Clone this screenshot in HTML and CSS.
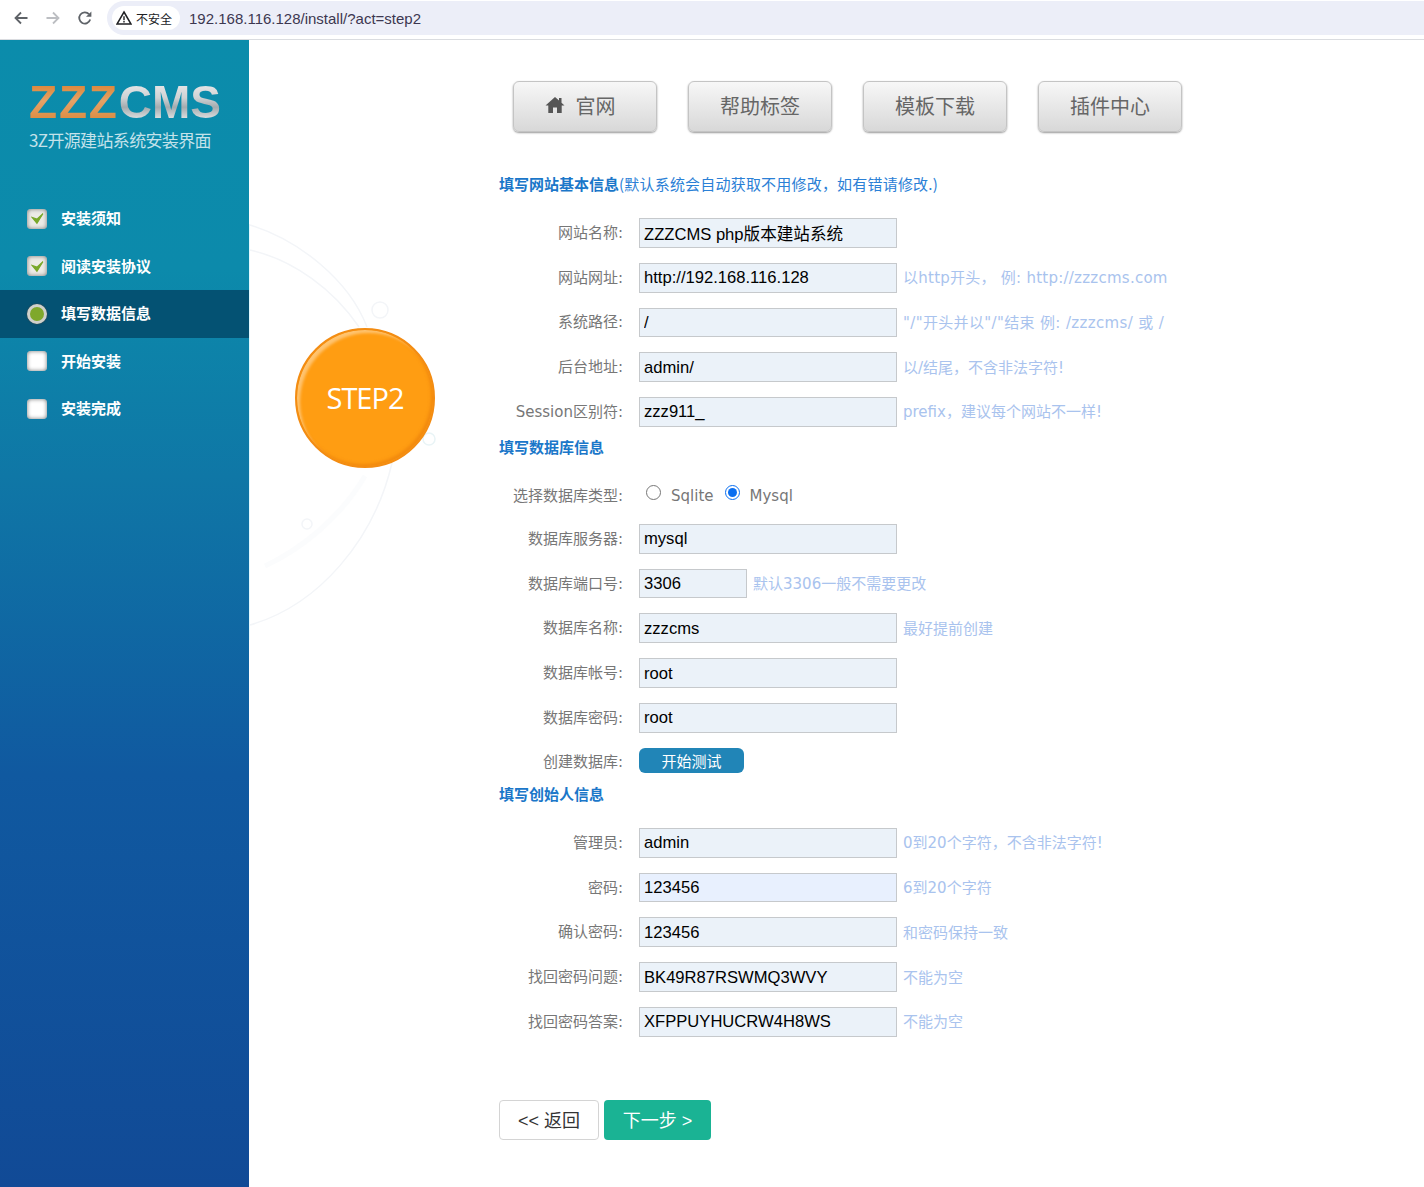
FILE: index.html
```html
<!DOCTYPE html>
<html lang="zh-CN">
<head>
    <meta charset="UTF-8">
    <meta name="viewport" content="width=device-width, initial-scale=1.0">
    <title>ZZZCMS 安装</title>
    <link rel="stylesheet" href="styles.css">
</head>
<body>

    <div class="toolbar">
        <svg class="tool-icon" viewBox="0 0 16 16"><path d="M14.5 8H2.5M8 2.5 2.5 8 8 13.5" fill="none" stroke="#5f6368" stroke-width="1.8"/></svg>
        <svg class="tool-icon" viewBox="0 0 16 16"><path d="M1.5 8h12M8 2.5 13.5 8 8 13.5" fill="none" stroke="#bcbec2" stroke-width="1.8"/></svg>
        <svg class="tool-icon" viewBox="0 0 16 16"><path d="M13.2 9.6A5.6 5.6 0 1 1 12 4.2" fill="none" stroke="#5f6368" stroke-width="1.8"/><path d="M14.4 1.4v5.4H9z" fill="#5f6368"/></svg>
        <div class="address">
            <div class="chip">
                <svg class="warn" viewBox="0 0 16 16"><path d="M8 2 15 14H1z" fill="none" stroke="#202124" stroke-width="1.5"/><path d="M7.3 6.2h1.4v4H7.300zM7.3 11h1.4v1.400H7.300z" fill="#202124"/></svg>
                <span>不安全</span>
            </div>
            <span class="url">192.168.116.128/install/?act=step2</span>
        </div>
    </div>

    <div class="page">
        <div class="sidebar">
            <div class="logo"><span class="logo-zzz">ZZZ</span><span class="logo-cms">CMS</span></div>
            <div class="logo-sub">3Z开源建站系统安装界面</div>
            <ul class="steps">
                <li><span class="box done"><svg viewBox="0 0 12 12"><path d="M1 5 5.500 10.500 11 1.500 5.500 6.500z" fill="#79a82b" stroke="#79a82b"/></svg></span>安装须知</li>
                <li><span class="box done"><svg viewBox="0 0 12 12"><path d="M1 5 5.500 10.500 11 1.500 5.500 6.500z" fill="#79a82b" stroke="#79a82b"/></svg></span>阅读安装协议</li>
                <li class="active"><span class="dot"></span>填写数据信息</li>
                <li><span class="box"></span>开始安装</li>
                <li><span class="box"></span>安装完成</li>
            </ul>
        </div>

        <div class="step-col">
            <svg class="rings" viewBox="0 0 250 440">
                <path d="M0.500 14V430" fill="none" stroke="#e2f9ff" stroke-width="1"/>
                <path d="M1 15C50 30 100 70 118 117" fill="none" stroke="#f3f5f8" stroke-width="1.500"/>
                <path d="M1 40C45 50 85 80 110 117" fill="none" stroke="#f3f5f8" stroke-width="1.500"/>
                <path d="M143 253C125 330 70 395 1 415" fill="none" stroke="#f3f5f8" stroke-width="1.500"/>
                <path d="M116 266C90 310 50 340 16 356" fill="none" stroke="#fbfcfd" stroke-width="5"/>
                <circle cx="131" cy="100" r="8" fill="none" stroke="#f3f5f8" stroke-width="1.500"/>
                <circle cx="180" cy="229" r="6" fill="none" stroke="#e9f4f6" stroke-width="1.500"/>
                <circle cx="58" cy="314" r="5" fill="none" stroke="#f3f5f8" stroke-width="1.500"/>
            </svg>
            <div class="step-ball">STEP2</div>
        </div>

        <div class="content">
            <div class="top-nav">
                <a class="top-btn home-btn"><svg class="home" viewBox="0 0 20 18"><path d="M10 1 0.500 9.500H3.300V17H8V11.500H12V17H16.700V9.500H19.500L16.500 6.800V2H14V4.600z" fill="#555"/></svg>官网</a>
                <a class="top-btn">帮助标签</a>
                <a class="top-btn">模板下载</a>
                <a class="top-btn">插件中心</a>
            </div>

            <div class="sec-title first"><b>填写网站基本信息</b>(默认系统会自动获取不用修改，如有错请修改.)</div>
            <div class="group">
                <div class="row"><label>网站名称:</label><input type="text" value="ZZZCMS php版本建站系统"></div>
                <div class="row"><label>网站网址:</label><input type="text" value="http://192.168.116.128"><span class="hint wide">以http开头， 例: http://zzzcms.com</span></div>
                <div class="row"><label>系统路径:</label><input type="text" value="/"><span class="hint wider">"/"开头并以"/"结束 例: /zzzcms/ 或 /</span></div>
                <div class="row"><label>后台地址:</label><input type="text" value="admin/"><span class="hint">以/结尾，不含非法字符!</span></div>
                <div class="row"><label>Session区别符:</label><input type="text" value="zzz911_"><span class="hint">prefix，建议每个网站不一样!</span></div>
            </div>

            <div class="sec-title"><b>填写数据库信息</b></div>
            <div class="group db">
                <div class="row radio-row">
                    <label>选择数据库类型:</label>
                    <input class="radio" type="radio" name="dbtype"><span class="radio-text">Sqlite</span>
                    <input class="radio" type="radio" name="dbtype" checked><span class="radio-text">Mysql</span>
                </div>
                <div class="row"><label>数据库服务器:</label><input type="text" value="mysql"></div>
                <div class="row"><label>数据库端口号:</label><input class="short" type="text" value="3306"><span class="hint">默认3306一般不需要更改</span></div>
                <div class="row"><label>数据库名称:</label><input type="text" value="zzzcms"><span class="hint">最好提前创建</span></div>
                <div class="row"><label>数据库帐号:</label><input type="text" value="root"></div>
                <div class="row"><label>数据库密码:</label><input type="text" value="root"></div>
                <div class="row btn-row"><label>创建数据库:</label><button class="test-btn">开始测试</button></div>
            </div>

            <div class="sec-title third"><b>填写创始人信息</b></div>
            <div class="group">
                <div class="row"><label>管理员:</label><input type="text" value="admin"><span class="hint">0到20个字符，不含非法字符!</span></div>
                <div class="row"><label>密码:</label><input class="autofill" type="text" value="123456"><span class="hint">6到20个字符</span></div>
                <div class="row"><label>确认密码:</label><input type="text" value="123456"><span class="hint">和密码保持一致</span></div>
                <div class="row"><label>找回密码问题:</label><input type="text" value="BK49R87RSWMQ3WVY"><span class="hint">不能为空</span></div>
                <div class="row"><label>找回密码答案:</label><input type="text" value="XFPPUYHUCRW4H8WS"><span class="hint">不能为空</span></div>
            </div>

            <div class="actions">
                <button class="btn-back">&lt;&lt; 返回</button>
                <button class="btn-next">下一步 &gt;</button>
            </div>
        </div>
    </div>

</body>
</html>
```

FILE: styles.css
```css
* {
    box-sizing: border-box;
}
html, body {
    margin: 0;
    height: 1187px;
    overflow: hidden;
}
body {
    font-family: "DejaVu Sans", "Noto Sans CJK SC", sans-serif;
    font-size: 15px;
    background-color: #fff;
}

/* browser bar */
.toolbar {
    display: flex;
    align-items: flex-start;
    height: 40px;
    padding: 1px 0 0 13px;
    background-color: #fff;
    border-bottom: 1px solid #dadce0;
}
.tool-icon {
    width: 16px;
    height: 16px;
    margin: 9px 16px 0 0;
}
.address {
    display: flex;
    align-items: center;
    flex: 1;
    height: 34px;
    margin-left: -2px;
    padding-left: 5px;
    background-color: #eceef8;
    border-radius: 17px 0 0 17px;
}
.chip {
    display: flex;
    align-items: center;
    height: 24px;
    padding: 0 8px 0 4px;
    background-color: #fff;
    border-radius: 12px;
    font-family: "Noto Sans CJK SC", sans-serif;
    font-size: 12px;
    color: #202124;
}
.warn {
    width: 16px;
    height: 16px;
    margin-right: 4px;
}
.url {
    margin-left: 9px;
    font-family: "Liberation Sans", sans-serif;
    font-size: 15px;
    color: #3c3750;
}

.page {
    display: flex;
    height: 1147px;
}

/* left menu */
.sidebar {
    width: 249px;
    flex-shrink: 0;
    background: linear-gradient(180deg, #0b8cab 0%, #0c8aab 20%, #0f77a6 38%, #1059a0 64%, #114a96 100%);
}
.logo {
    height: 46px;
    margin: 39px 0 0 29px;
    font-family: "Liberation Sans", sans-serif;
    font-size: 46px;
    font-weight: bold;
    line-height: 46px;
    white-space: nowrap;
}
.logo span {
    -webkit-background-clip: text;
    background-clip: text;
    color: transparent;
}
.logo-zzz {
    background-image: linear-gradient(180deg, #dd8a3f 20%, #e6a267 48%, #dc8f47 80%);
    letter-spacing: 1.800px;
}
.logo-cms {
    background-image: linear-gradient(180deg, #e2e3e4 20%, #cfd2d4 42%, #a3abaf 60%, #d8dadb 80%);
}
.logo-sub {
    margin: 4px 0 0 29px;
    font-family: "Noto Sans CJK SC", sans-serif;
    font-size: 17px;
    line-height: 22px;
    letter-spacing: -0.650px;
    color: #c4e2ea;
    white-space: nowrap;
}
.steps {
    list-style: none;
    margin: 44px 0 0;
    padding: 0;
}
.steps li {
    display: flex;
    align-items: center;
    height: 47.500px;
    padding: 0 0 2px 27px;
    font-family: "Noto Sans CJK SC", sans-serif;
    font-size: 15px;
    font-weight: bold;
    color: #fff;
}
.steps li.active {
    background-color: #045273;
}
.box {
    display: flex;
    align-items: center;
    justify-content: center;
    width: 20px;
    height: 20px;
    margin: 2px 14px 0 0;
    background-color: #fff;
    border-radius: 4px;
    box-shadow: inset 0 0 4px #777;
}
.box.done {
    background-color: #ecebe6;
}
.box svg {
    width: 13px;
    height: 13px;
}
.dot {
    width: 20px;
    height: 20px;
    margin: 2px 14px 0 0;
    background-color: #7fa82c;
    border: 3px solid #cfd1cb;
    border-radius: 50%;
    box-shadow: 0 0 2px #444;
}

/* step ball */
.step-col {
    position: relative;
    width: 250px;
    flex-shrink: 0;
}
.rings {
    position: absolute;
    left: 0;
    top: 170px;
    width: 250px;
    height: 440px;
}
.step-ball {
    position: absolute;
    left: 46px;
    top: 288px;
    width: 140px;
    height: 140px;
    padding-bottom: 2px;
    line-height: 136px;
    text-align: center;
    font-family: "Open Sans", sans-serif;
    font-size: 29px;
    letter-spacing: -1px;
    color: #fff;
    background-color: #ff9d12;
    border: 2px solid #f38c12;
    border-radius: 50%;
    box-shadow: inset 4px 4px 3px -1px rgba(255, 255, 255, 0.4), inset -2px -2px 3px rgba(230, 120, 10, 0.5);
}

/* form */
.content {
    flex: 1;
    padding-top: 41px;
}
.top-nav {
    display: flex;
    gap: 31px;
    margin-left: 14px;
}
.top-btn {
    display: flex;
    align-items: center;
    justify-content: center;
    width: 144px;
    height: 51px;
    padding-bottom: 3px;
    font-family: "Noto Sans CJK SC", sans-serif;
    font-size: 20px;
    color: #666;
    background: linear-gradient(180deg, #f7f7f7 0%, #d8d8d8 100%);
    border: 1px solid #c4c4c4;
    border-radius: 6px;
    box-shadow: 0 1px 2px #999;
}
.home-btn {
    padding-right: 10px;
}
.home {
    width: 20px;
    height: 18px;
    margin-right: 11px;
}
.sec-title {
    height: 20px;
    margin-top: 10.400px;
    margin-bottom: 22px;
    font-family: "Noto Sans CJK SC", sans-serif;
    font-size: 15px;
    line-height: 20px;
    letter-spacing: 0.200px;
    color: #2b80d6;
    white-space: nowrap;
}
.sec-title b {
    letter-spacing: 0;
    color: #1b77c9;
}
.sec-title.first {
    margin-top: 42px;
    margin-bottom: 24px;
}
.sec-title.third {
    margin-top: 11.250px;
    margin-bottom: 24px;
}
.group {
    display: flex;
    flex-direction: column;
    gap: 15px;
}
.row {
    display: flex;
    align-items: center;
    height: 29.750px;
}
.row label {
    width: 124px;
    margin-right: 16px;
    padding-bottom: 3px;
    text-align: right;
    color: #777;
    white-space: nowrap;
}
.radio-row label, .btn-row label {
    padding-bottom: 0;
}
.radio-row label {
    margin-right: 17px;
}
.row input[type="text"] {
    width: 258px;
    height: 29.750px;
    padding: 1px 4px 0;
    font-family: "Liberation Sans", "Noto Sans CJK SC", sans-serif;
    font-size: 16.600px;
    color: #000;
    background-color: #ebf2f9;
    border: 1px solid #c6c9cc;
    outline: none;
}
.row input.short {
    width: 108px;
}
.row input.autofill {
    background-color: #e8f0fe;
}
.hint {
    margin-left: 6px;
    padding-bottom: 2px;
    color: #a9c3ee;
    white-space: nowrap;
}
.hint.wide {
    letter-spacing: 0.250px;
}
.hint.wider {
    letter-spacing: 0.350px;
}
.radio {
    width: 15px;
    height: 15px;
    margin: 0 10px 3px 6px;
    accent-color: #0b6ff0;
}
.radio-text {
    margin-right: 5px;
    padding-top: 3px;
    color: #777;
}
.btn-row {
    height: 25px;
}
.test-btn {
    width: 105px;
    height: 25px;
    padding: 0;
    font-family: "Noto Sans CJK SC", sans-serif;
    font-size: 15px;
    color: #fff;
    background-color: #2185b7;
    border: none;
    border-radius: 6px;
}
.actions {
    display: flex;
    gap: 5px;
    margin-top: 63.400px;
}
.actions button {
    height: 40px;
    padding: 0 0 3px;
    font-family: "Liberation Sans", "Noto Sans CJK SC", sans-serif;
    font-size: 18px;
    border-radius: 4px;
}
.btn-back {
    width: 100px;
    color: #333;
    background-color: #fff;
    border: 1px solid #d4d4d4;
}
.btn-next {
    width: 107px;
    color: #fff;
    background-color: #1ab394;
    border: none;
}
```
